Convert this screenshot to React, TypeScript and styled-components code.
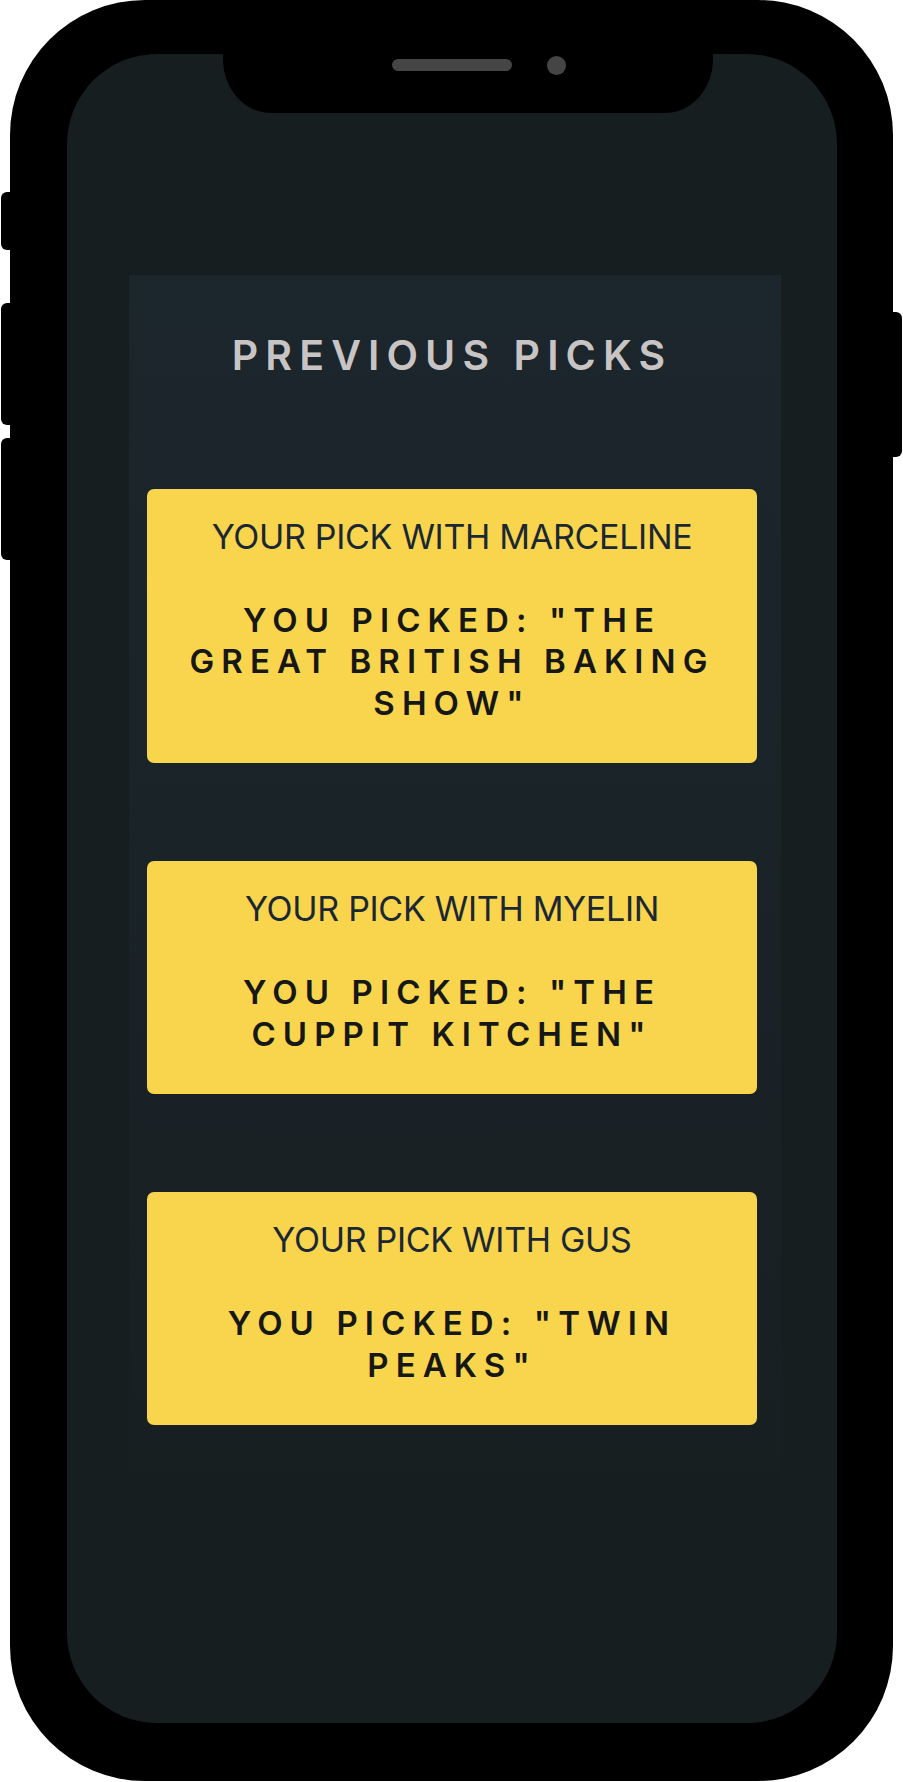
import React from 'react';
import styled, { createGlobalStyle } from 'styled-components';

const GlobalStyle = createGlobalStyle`
  html, body {
    margin: 0;
    padding: 0;
    background: #ffffff;
  }
  body {
    font-family: Inter, "Noto Sans", Arial, sans-serif;
  }
  *, *::before, *::after {
    box-sizing: border-box;
  }
`;

const Stage = styled.div`
  width: 903px;
  height: 1782px;
  padding-left: 10px;
  overflow: hidden;
`;

const PhoneBody = styled.div`
  position: relative;
  width: 883px;
  height: 1781px;
  background: #000000;
  border-radius: 135px;
  padding: 54px 56px 58px 57px;
`;

const SideButton = styled.div<{ $side: 'left' | 'right'; $top: number; $height: number }>`
  position: absolute;
  top: ${(p) => p.$top}px;
  height: ${(p) => p.$height}px;
  width: 16px;
  background: #000000;
  ${(p) =>
    p.$side === 'left'
      ? 'left: -9px; border-radius: 6px 0 0 6px;'
      : 'right: -9px; border-radius: 0 6px 6px 0;'}
`;

const Screen = styled.div`
  position: relative;
  height: 100%;
  background: #171e1f;
  border-radius: 90px;
  overflow: hidden;
  padding: 221px 56px 0 62px;
`;

const Notch = styled.div`
  position: absolute;
  top: 0;
  left: 156px;
  width: 490px;
  height: 59px;
  background: #000000;
  border-radius: 0 0 48px 48px / 0 0 54px 54px;
`;

const Sensors = styled.div`
  display: flex;
  align-items: center;
  gap: 35px;
  height: 22px;
  padding-left: 169px;
`;

const Speaker = styled.div`
  width: 120px;
  height: 12px;
  border-radius: 6px;
  background: #464545;
`;

const Camera = styled.div`
  width: 19px;
  height: 19px;
  border-radius: 50%;
  background: #464545;
`;

const Panel = styled.section`
  display: flex;
  flex-direction: column;
  background: linear-gradient(180deg, #1c262d 0%, #1a2328 45%, #171f21 100%);
  padding: 56px 24px 47px 18px;
`;

const PanelTitle = styled.h1`
  margin: 0 0 109px;
  text-align: center;
  font-size: 41px;
  line-height: 1.2;
  font-weight: 600;
  letter-spacing: 7.1px;
  color: #c8c4c4;
`;

const CardList = styled.div`
  display: flex;
  flex-direction: column;
  gap: 98px;
`;

const Card = styled.article`
  display: flex;
  flex-direction: column;
  align-items: center;
  gap: 42px;
  background: #f9d54e;
  border-radius: 7px;
  padding: 28px 30px 39px;
  text-align: center;
`;

const CardTitle = styled.h2`
  margin: 0;
  font-size: 34px;
  line-height: 1.2;
  font-weight: 400;
  letter-spacing: -0.3px;
  color: #1b2833;
`;

const Picked = styled.p`
  margin: 0;
  font-size: 33px;
  line-height: 41.5px;
  font-weight: 600;
  letter-spacing: 7.1px;
  color: #161717;
`;

const picks = [
  { name: 'MARCELINE', show: 'THE GREAT BRITISH BAKING SHOW' },
  { name: 'MYELIN', show: 'THE CUPPIT KITCHEN' },
  { name: 'GUS', show: 'TWIN PEAKS' },
];

export default function App() {
  return (
    <>
      <GlobalStyle />
      <Stage>
        <PhoneBody>
          <SideButton $side="left" $top={192} $height={58} />
          <SideButton $side="left" $top={303} $height={122} />
          <SideButton $side="left" $top={438} $height={122} />
          <SideButton $side="right" $top={312} $height={145} />
          <Screen>
            <Notch>
              <Sensors>
                <Speaker />
                <Camera />
              </Sensors>
            </Notch>
            <Panel>
              <PanelTitle>PREVIOUS PICKS</PanelTitle>
              <CardList>
                {picks.map((p) => (
                  <Card key={p.name}>
                    <CardTitle>YOUR PICK WITH {p.name}</CardTitle>
                    <Picked>YOU PICKED: "{p.show}"</Picked>
                  </Card>
                ))}
              </CardList>
            </Panel>
          </Screen>
        </PhoneBody>
      </Stage>
    </>
  );
}
